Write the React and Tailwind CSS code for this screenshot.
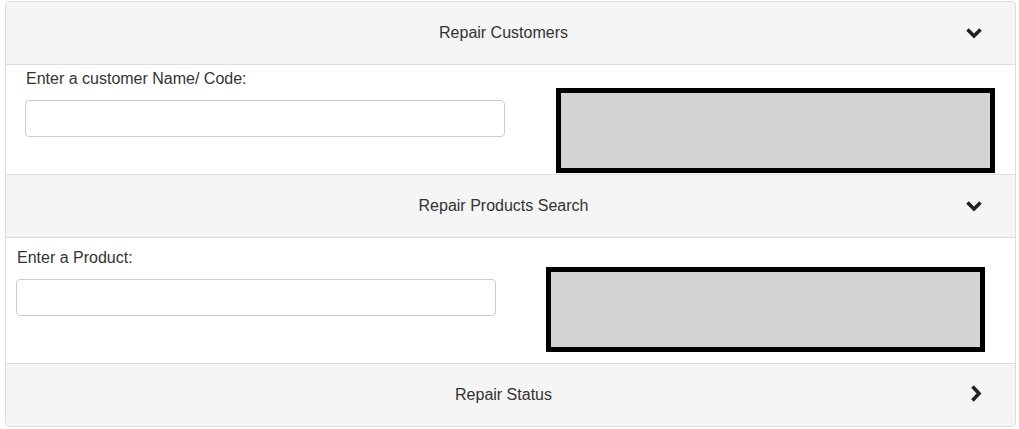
import React from "react";

function ChevronDown() {
  return (
    <svg width="16" height="12" viewBox="0 0 16 12" className="block">
      <path d="M1.5 2.5 L8 9 L14.5 2.5" fill="none" stroke="#222" strokeWidth="3.6" strokeLinejoin="miter" />
    </svg>
  );
}

function ChevronRight() {
  return (
    <svg width="12" height="17" viewBox="0 0 12 17" className="block">
      <path d="M2.5 1.5 L9 8.5 L2.5 15.5" fill="none" stroke="#222" strokeWidth="3.6" strokeLinejoin="miter" />
    </svg>
  );
}

function Header({ title, open }) {
  return (
    <div className="relative h-[62px] bg-[#f5f5f5] flex items-center justify-center pr-[14px] text-[16px] text-[#333]">
      <span>{title}</span>
      <div className={open ? "absolute right-[33px] top-[25px]" : "absolute right-[33px] top-[21px]"}>
        {open ? <ChevronDown /> : <ChevronRight />}
      </div>
    </div>
  );
}

export default function App() {
  return (
    <div className="pt-px px-[5px] bg-white" style={{ fontFamily: '"Liberation Sans", Arial, sans-serif' }}>
      <div className="border border-[#ddd] rounded-[4px] w-[1011px] overflow-hidden">
        <Header title="Repair Customers" open />
        <div className="border-t border-[#ddd] flex pt-[4px] pb-[1px] pl-[19px]">
          <div className="w-[480px] flex flex-col">
            <label className="h-[20px] leading-[20px] text-[16px] text-[#333] pl-px">Enter a customer Name/ Code:</label>
            <input className="mt-[11px] h-[37px] border border-[#ccc] rounded-[4px] outline-none" />
          </div>
          <div className="ml-[51px] mt-[19px] w-[439px] h-[85px] border-[5px] border-black bg-[#d3d3d3]" />
        </div>
        <div className="border-t border-[#ddd]">
          <Header title="Repair Products Search" open />
        </div>
        <div className="border-t border-[#ddd] flex pt-[10px] pb-[11px] pl-[10px]">
          <div className="w-[480px] flex flex-col">
            <label className="h-[20px] leading-[20px] text-[16px] text-[#333] pl-px">Enter a Product:</label>
            <input className="mt-[11px] h-[37px] border border-[#ccc] rounded-[4px] outline-none" />
          </div>
          <div className="ml-[50px] mt-[19px] w-[439px] h-[85px] border-[5px] border-black bg-[#d3d3d3]" />
        </div>
        <div className="border-t border-[#ddd]">
          <Header title="Repair Status" />
        </div>
      </div>
    </div>
  );
}
